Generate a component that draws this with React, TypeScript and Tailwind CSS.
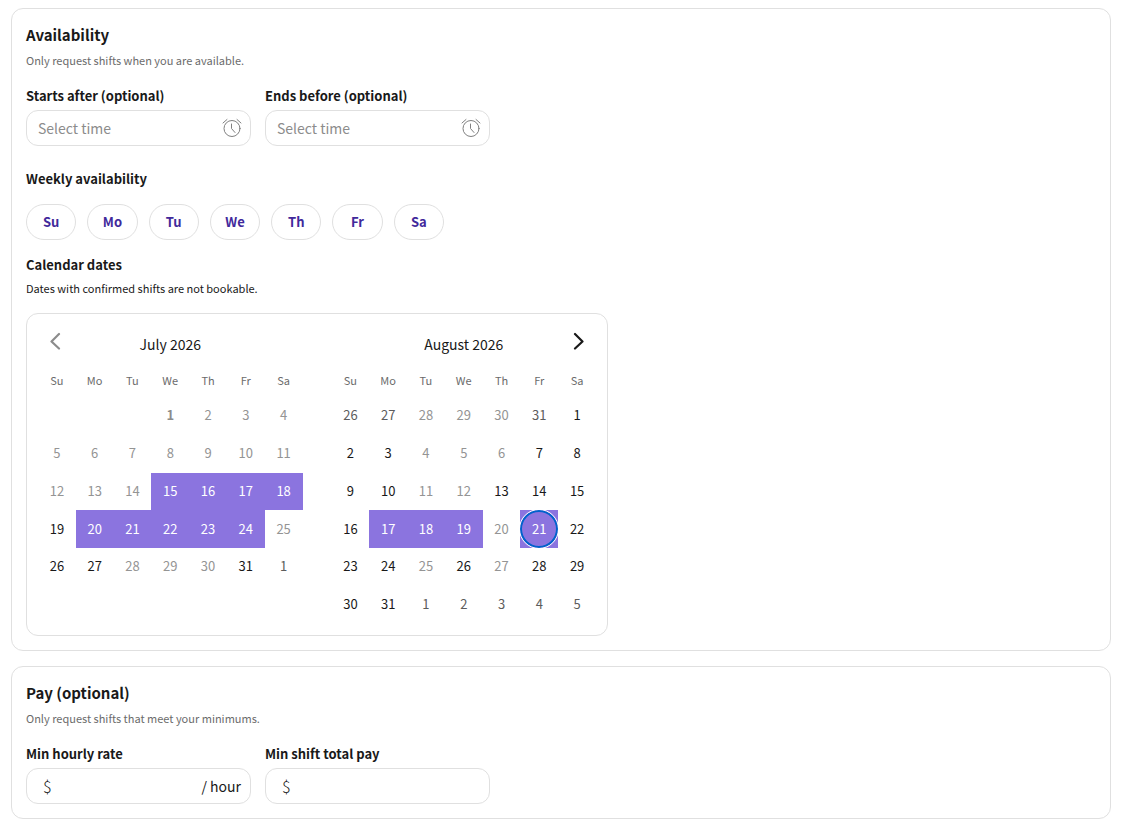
import { ReactNode, useState } from "react";

type DayState = "open" | "muted" | "outside" | "selected" | "focused" | "today";

type Day = { date: number; state: DayState } | null;

type FieldProps = {
  id: string;
  label: string;
  children: ReactNode;
};

const WEEKDAYS = ["Su", "Mo", "Tu", "We", "Th", "Fr", "Sa"];

const STATE_KEYS: Record<string, DayState> = {
  m: "muted",
  o: "outside",
  s: "selected",
  f: "focused",
  t: "today"
};

const DAY_TEXT: Record<DayState, string> = {
  open: "text-[#191919]",
  muted: "text-[#949494]",
  outside: "text-[#5c5c5c]",
  selected: "text-white",
  focused: "text-white rounded-full ring-2 ring-inset ring-[#0062cc] outline outline-1 outline-white",
  today: "font-bold text-[#8c8c8c]"
};

// One row per week. A letter after the number gives the day's state, "-" is an empty cell.
const JULY = [
  "- - - 1t 2m 3m 4m",
  "5m 6m 7m 8m 9m 10m 11m",
  "12m 13m 14m 15s 16s 17s 18s",
  "19 20s 21s 22s 23s 24s 25m",
  "26 27 28m 29m 30m 31 1o"
];

const AUGUST = [
  "26o 27o 28m 29m 30m 31o 1",
  "2 3 4m 5m 6m 7 8",
  "9 10 11m 12m 13 14 15",
  "16 17s 18s 19s 20m 21f 22",
  "23 24 25m 26 27m 28 29",
  "30 31 1o 2o 3o 4o 5o"
];

function parseWeek(week: string): Day[] {
  return week.split(" ").map((cell) => {
    if (cell === "-") return null;
    return { date: parseInt(cell, 10), state: STATE_KEYS[cell.slice(-1)] ?? "open" };
  });
}

function AlarmIcon() {
  return (
    <svg width="20" height="20" viewBox="0 0 20 20" fill="none" stroke="#808080" strokeWidth="1" strokeLinecap="round" aria-hidden="true">
      <circle cx="10" cy="10.5" r="8" />
      <path d="M9.5 6v4.5l3.5 4" strokeLinejoin="round" />
      <path d="M1 5 5 1.5M19 5l-4-3.5" />
    </svg>
  );
}

function Chevron({ direction }: { direction: "left" | "right" }) {
  return (
    <svg width="12" height="18" viewBox="0 0 12 18" fill="none" stroke="currentColor" strokeWidth="2.2" strokeLinecap="round" strokeLinejoin="round" aria-hidden="true">
      <path d={direction === "left" ? "M10 2 2.5 9.5l7.5 7" : "M2 2l7.5 7.5-7.5 7"} />
    </svg>
  );
}

function Section({ title, description, children }: { title: string; description: string; children: ReactNode }) {
  return (
    <section className="rounded-xl border border-[#e0e0e0] p-[14px]">
      <h2 className="text-[15px] font-bold leading-6">{title}</h2>
      <p className="mt-[3px] text-[11px] leading-5 text-[#6b6b6b]">{description}</p>
      {children}
    </section>
  );
}

function Field({ id, label, children }: FieldProps) {
  return (
    <div className="w-[225px]">
      <label htmlFor={id} className="block text-[13px] font-bold leading-5">
        {label}
      </label>
      <div className="mt-1 flex h-9 items-center rounded-xl border border-[#e0e0e0]">{children}</div>
    </div>
  );
}

function TimeField({ id, label }: { id: string; label: string }) {
  return (
    <Field id={id} label={label}>
      <input
        id={id}
        placeholder="Select time"
        className="min-w-0 flex-1 bg-transparent pl-[11px] text-sm outline-none placeholder:text-[#8c8c8c]"
      />
      <span className="mr-2">
        <AlarmIcon />
      </span>
    </Field>
  );
}

function MoneyField({ id, label, suffix }: { id: string; label: string; suffix?: string }) {
  return (
    <Field id={id} label={label}>
      <span className="pl-4 text-base font-light">$</span>
      <input id={id} inputMode="decimal" className="min-w-0 flex-1 bg-transparent px-2 text-sm outline-none" />
      {suffix ? <span className="pr-[9px] text-sm">{suffix}</span> : null}
    </Field>
  );
}

function Month({ title, weeks, nav }: { title: string; weeks: string[]; nav: "prev" | "next" }) {
  return (
    <div className="min-w-0 flex-1">
      <div className="grid h-11 grid-cols-[34px_1fr_34px] items-start">
        {nav === "prev" ? (
          <button type="button" aria-label="Previous month" disabled className="flex h-8 items-center justify-center text-[#8c8c8c]">
            <Chevron direction="left" />
          </button>
        ) : null}
        <h3 className="col-start-2 text-center text-sm leading-[38px]">{title}</h3>
        {nav === "next" ? (
          <button type="button" aria-label="Next month" className="flex h-8 items-center justify-center">
            <Chevron direction="right" />
          </button>
        ) : null}
      </div>
      <table className="w-full table-fixed border-collapse text-center" aria-label={title}>
        <thead>
          <tr>
            {WEEKDAYS.map((day) => (
              <th key={day} className="h-7 p-0 align-top text-[11px] font-normal leading-[22px] text-[#6b6b6b]">
                {day}
              </th>
            ))}
          </tr>
        </thead>
        <tbody>
          {weeks.map((week) => (
            <tr key={week}>
              {parseWeek(week).map((day, index) => (
                <td key={index} className={day?.state === "selected" || day?.state === "focused" ? "bg-[#8b74df] p-0" : "p-0"}>
                  {day ? (
                    <button
                      type="button"
                      disabled={day.state === "muted" || day.state === "today"}
                      className={`flex aspect-square w-full items-center justify-center pb-[2px] text-[13px] ${DAY_TEXT[day.state]}`}
                    >
                      {day.date}
                    </button>
                  ) : null}
                </td>
              ))}
            </tr>
          ))}
        </tbody>
      </table>
    </div>
  );
}

export default function App() {
  const [weekdays, setWeekdays] = useState<string[]>([]);

  const toggleWeekday = (day: string) => {
    setWeekdays((current) => (current.includes(day) ? current.filter((item) => item !== day) : [...current, day]));
  };

  return (
    <main className="flex flex-col gap-[15px] bg-white py-2 pl-[11px] pr-3 font-['Noto_Sans_CJK_SC',sans-serif] text-[#191919]">
      <Section title="Availability" description="Only request shifts when you are available.">
        <div className="mt-4 flex flex-wrap gap-[14px]">
          <TimeField id="starts-after" label="Starts after (optional)" />
          <TimeField id="ends-before" label="Ends before (optional)" />
        </div>

        <h3 className="mt-[23px] text-[13px] font-bold leading-5">Weekly availability</h3>
        <div className="mt-[15px] grid max-w-[418px] grid-cols-7 gap-[11px]">
          {WEEKDAYS.map((day) => (
            <button
              key={day}
              type="button"
              aria-pressed={weekdays.includes(day)}
              onClick={() => toggleWeekday(day)}
              className={`h-9 rounded-full border text-[13px] font-bold text-[#41299b] ${
                weekdays.includes(day) ? "border-[#41299b]" : "border-[#e0e0e0]"
              }`}
            >
              {day}
            </button>
          ))}
        </div>

        <h3 className="mt-[15px] text-[13px] font-bold leading-5">Calendar dates</h3>
        <p className="mt-[3px] text-[11px] leading-5">Dates with confirmed shifts are not bookable.</p>
        <div className="mt-[15px] flex max-w-[582px] gap-[29px] rounded-xl border border-[#e0e0e0] p-[11px]">
          <Month title="July 2026" weeks={JULY} nav="prev" />
          <Month title="August 2026" weeks={AUGUST} nav="next" />
        </div>
      </Section>

      <Section title="Pay (optional)" description="Only request shifts that meet your minimums.">
        <div className="mt-4 flex flex-wrap gap-[14px]">
          <MoneyField id="min-hourly-rate" label="Min hourly rate" suffix="/ hour" />
          <MoneyField id="min-shift-pay" label="Min shift total pay" />
        </div>
      </Section>
    </main>
  );
}
